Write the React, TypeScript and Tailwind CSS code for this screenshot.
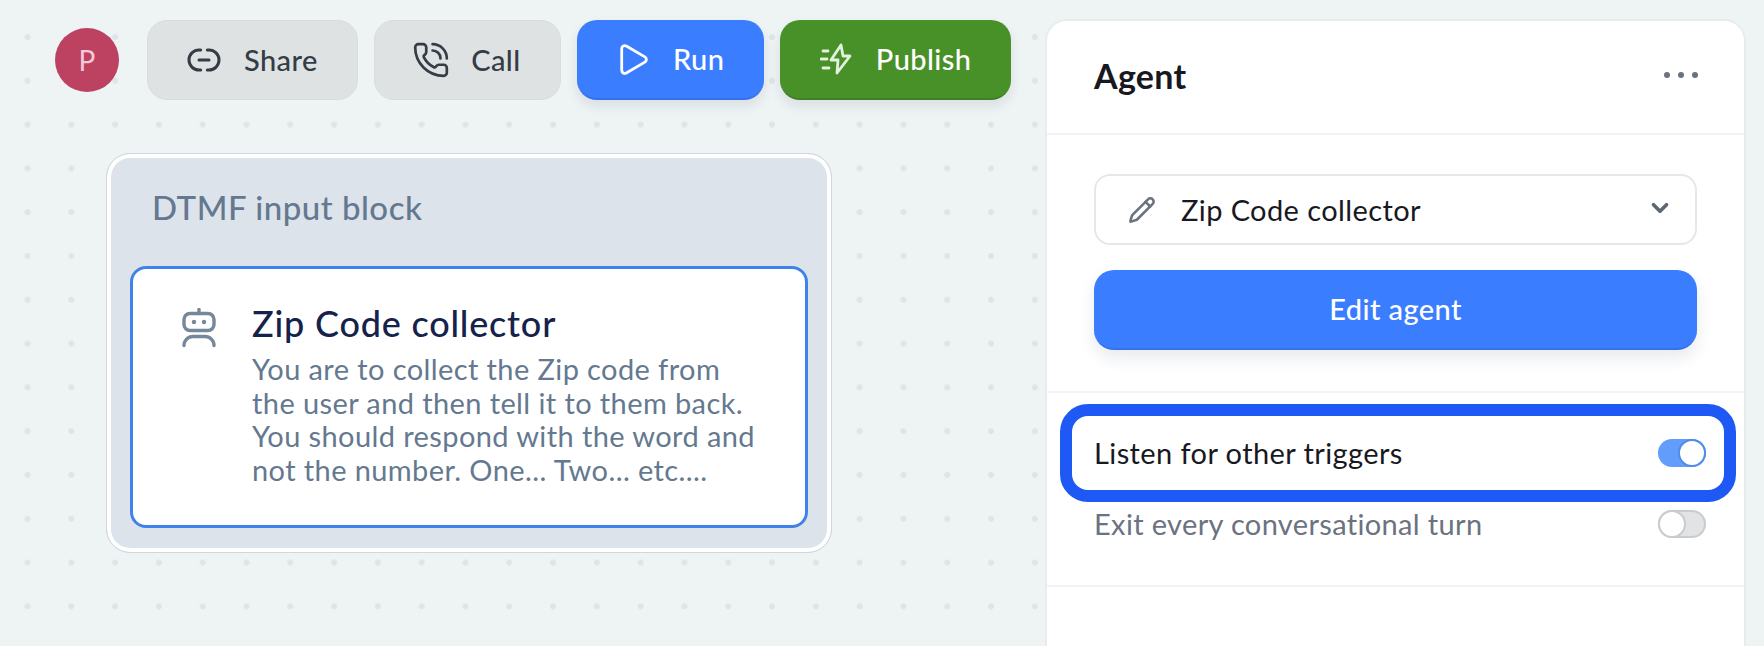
import { ChevronDown, Pencil, PhoneCall, Play } from "lucide-react";
import type { ReactNode } from "react";

function ShareIcon() {
  return (
    <svg width="40" height="40" viewBox="0 0 24 24" fill="none" stroke="currentColor" strokeWidth="1.8" strokeLinecap="round" className="shrink-0">
      <path d="M10 6H9a6 6 0 0 0 0 12h1" />
      <path d="M14 6h1a6 6 0 0 1 0 12h-1" />
      <path d="M9 12h6" />
    </svg>
  );
}

function ZapFastIcon() {
  return (
    <svg width="32" height="32" viewBox="0 0 32 32" fill="none" stroke="#e4f1df" strokeWidth="2.8" strokeLinecap="round" strokeLinejoin="round" className="shrink-0">
      <path d="M3 8h5" />
      <path d="M1 16h6" />
      <path d="M3 25h6" />
      <path d="M21 2 11 17h7l-1 13 13-17h-7z" />
    </svg>
  );
}

function RobotIcon() {
  return (
    <svg width="34" height="40" viewBox="0 0 34 40" fill="none" stroke="#74879b" strokeWidth="3.4" strokeLinecap="round" className="shrink-0">
      <rect x="2" y="5.5" width="30" height="17" rx="6" />
      <path d="M17 1.5v4" />
      <circle cx="12" cy="14" r="2.2" fill="#74879b" stroke="none" />
      <circle cx="22" cy="14" r="2.2" fill="#74879b" stroke="none" />
      <path d="M2 37.5c0-5 4-9 9-9h12c5 0 9 4 9 9" />
    </svg>
  );
}

function ToolButton({ icon, label, className }: { icon: ReactNode; label: string; className: string }) {
  return (
    <button className={`flex h-[80px] items-center gap-[24px] rounded-[20px] pl-[40px] pr-[39.5px] text-[29px] font-medium tracking-[0.4px] ${className}`}>
      <span className="flex w-[32px] shrink-0 items-center justify-center">{icon}</span>
      <span>{label}</span>
    </button>
  );
}

function Toggle({ on }: { on: boolean }) {
  return on ? (
    <span className="flex h-[28px] w-[48px] justify-end rounded-full bg-[#639dfb]">
      <span className="h-[28px] w-[28px] rounded-full border-2 border-[#4f8ceb] bg-white" />
    </span>
  ) : (
    <span className="flex h-[28px] w-[48px] justify-start rounded-full border-2 border-[#c9cccd] bg-[#e1e3e5]">
      <span className="-ml-[2px] -mt-[2px] h-[28px] w-[28px] rounded-full border-2 border-[#c9cccd] bg-white" />
    </span>
  );
}

export default function App() {
  return (
    <div
      className="flex h-[646px] w-[1764px] overflow-hidden bg-[#eef3f4] bg-[radial-gradient(circle_at_center,#dfe4e6_2.7px,transparent_3.2px)] bg-[size:43.8px_43.8px] bg-[position:5.6px_15.1px]"
      style={{ fontFamily: "Lato, 'Noto Sans', sans-serif" }}
    >
      <div className="flex w-[1045px] shrink-0 flex-col pl-[55px] pt-[20px]">
        <div className="flex items-center">
          <div className="mr-[28px] flex h-[64px] w-[64px] items-center justify-center rounded-full bg-[#bd4160] text-[28px] text-[#f5c9d6]">
            P
          </div>
          <div className="flex gap-[16px]">
            <ToolButton
              icon={<ShareIcon />}
              label="Share"
              className="border border-[#dadddf] bg-[#dfe2e3] text-[#343c45]"
            />
            <ToolButton
              icon={<PhoneCall size={38} strokeWidth={1.7} className="shrink-0" />}
              label="Call"
              className="border border-[#dadddf] bg-[#dfe2e3] text-[#343c45]"
            />
            <ToolButton
              icon={<Play size={37} strokeWidth={1.8} className="shrink-0" />}
              label="Run"
              className="border-b-2 border-[#3671ec] bg-[#3b7dff] text-white shadow-[0_6px_12px_rgba(30,50,80,0.10)]"
            />
            <ToolButton
              icon={<ZapFastIcon />}
              label="Publish"
              className="border-b-2 border-[#417f25] bg-[#489128] text-white shadow-[0_6px_12px_rgba(30,50,80,0.10)]"
            />
          </div>
        </div>

        <div className="ml-[51px] mt-[53px] w-[726px] rounded-[24px] border-[1.5px] border-[#cfd6e0] bg-[#dde3eb] shadow-[inset_0_0_0_4px_white]">
          <div className="p-[5px]">
            <div className="h-[107px] pl-[40px] pt-[23px]">
              <div className="text-[33px] font-medium leading-[50px] tracking-[0.5px] text-[#64798f]">DTMF input block</div>
            </div>
            <div className="mx-[18px] mb-[19px] flex h-[262px] gap-[36px] rounded-[16px] border-[3px] border-[#3f83e8] bg-white pl-[49px] pt-[39px]">
              <RobotIcon />
              <div className="-mt-[6px] min-w-0">
                <div className="text-[36px] font-medium leading-[42px] tracking-[0.8px] text-[#15224a]">Zip Code collector</div>
                <p className="mt-[8px] w-[505px] text-[29px] leading-[33.5px] tracking-[0.4px] text-[#64798f]">
                  You are to collect the Zip code from the user and then tell it to them back. You should respond with the word and not the number. One... Two... etc....
                </p>
              </div>
            </div>
          </div>
        </div>
      </div>

      <aside className="mt-[19px] flex h-[700px] w-[701px] shrink-0 flex-col rounded-t-[22px] border-2 border-[#e8ecee] bg-white">
        <div className="flex h-[112px] shrink-0 items-center justify-between pb-[4px] pl-[47px] pr-[46px]">
          <h2 className="text-[34px] font-bold tracking-[0.3px] text-[#18181f]">Agent</h2>
          <div className="flex gap-[8px]">
            <span className="h-[6px] w-[6px] rounded-full bg-[#6b7280]" />
            <span className="h-[6px] w-[6px] rounded-full bg-[#6b7280]" />
            <span className="h-[6px] w-[6px] rounded-full bg-[#6b7280]" />
          </div>
        </div>
        <div className="flex flex-col gap-[25px] border-t-2 border-[#f1f3f4] pb-[41px] pl-[47px] pr-[47px] pt-[39px]">
          <div className="flex h-[71px] items-center rounded-[16px] border-2 border-[#e5e7e8] pl-[32px] pr-[22px] text-[29px] tracking-[0.4px] text-[#18181f]">
            <Pencil size={28} strokeWidth={2.2} className="mr-[25px] shrink-0 text-[#6b7280]" />
            <span className="flex-1">Zip Code collector</span>
            <ChevronDown size={26} strokeWidth={3.4} className="-mt-[4px] text-[#5f6772]" />
          </div>
          <button className="h-[80px] rounded-[20px] border-b-2 border-[#3671ec] bg-[#3b7dff] text-[29px] font-medium tracking-[0.4px] text-white shadow-[0_8px_16px_rgba(30,50,80,0.10)]">
            Edit agent
          </button>
        </div>
        <div className="border-t-2 border-[#f1f3f4] pb-[47px] pt-[11px]">
          <div className="ml-[13px] mr-[8px] flex h-[98px] items-center justify-between rounded-[28px] border-[12px] border-[#1e58f5] pl-[22px] pr-[18px] text-[29px] tracking-[0.4px] text-[#18181f]">
            <span>Listen for other triggers</span>
            <Toggle on />
          </div>
          <div className="mt-[8px] flex h-[28px] items-center justify-between pl-[47px] pr-[38px] text-[29px] tracking-[0.35px] text-[#6b7280]">
            <span>Exit every conversational turn</span>
            <Toggle on={false} />
          </div>
        </div>
        <div className="border-t-2 border-[#f1f3f4]" />
      </aside>
    </div>
  );
}
